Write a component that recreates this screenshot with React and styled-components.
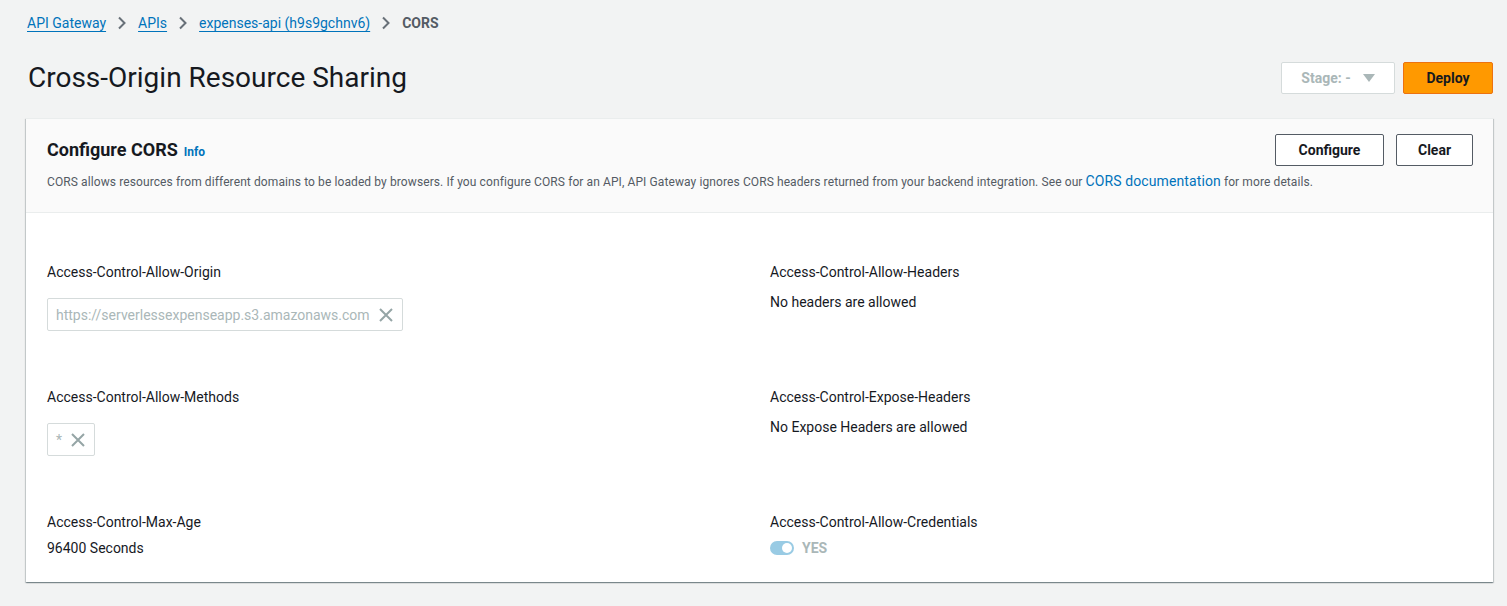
import React from 'react';
import styled, { createGlobalStyle } from 'styled-components';

const GlobalStyle = createGlobalStyle`
  body {
    margin: 0;
    background: #f2f3f3;
    font-family: Roboto, "Liberation Sans", sans-serif;
    color: #16191f;
  }
`

const Page = styled.div`
  padding: 12px 14px 24px 26px;
`

const Crumbs = styled.nav`
  display: flex;
  align-items: center;
  gap: 11px;
  font-size: 14px;
  height: 22px;
  padding-left: 1px;
`

const Crumb = styled.a`
  color: #0073bb;
  text-decoration: underline;
  text-underline-offset: 3px;
`

const Current = styled.span`
  color: #545b64;
  font-weight: 700;
`

const Chevron = () => (
  <svg width="10" height="14" viewBox="0 0 10 14">
    <path d="M2 1.5l5.5 5.5L2 12.5" fill="none" stroke="#687078" strokeWidth="2" />
  </svg>
)

const TitleRow = styled.div`
  display: flex;
  align-items: center;
  justify-content: space-between;
  margin-top: 27px;
  margin-bottom: 24px;
`

const Title = styled.h1`
  margin: 0;
  font-size: 28px;
  font-weight: 400;
  padding-left: 2px;
`

const Actions = styled.div`
  display: flex;
  gap: 8px;
`

const Button = styled.button`
  height: 32px;
  padding: 0 16px;
  font-family: inherit;
  font-size: 14px;
  font-weight: 700;
  white-space: nowrap;
  border-radius: 2px;
  cursor: pointer;
  border: 1px solid ${p => p.$primary ? '#ec7211' : p.$disabled ? '#d5dbdb' : '#545b64'};
  background: ${p => p.$primary ? '#ff9900' : '#fff'};
  color: ${p => p.$disabled ? '#aab7b8' : '#16191f'};
  width: ${p => p.$w || 'auto'};
  display: flex;
  align-items: center;
  justify-content: center;
  gap: 12px;
`

const Panel = styled.section`
  background: #fff;
  box-shadow: 0 1px 1px 0 rgba(0,28,36,0.3), 1px 1px 1px 0 rgba(0,28,36,0.15), -1px 1px 1px 0 rgba(0,28,36,0.15);
  border-top: 1px solid #eaeded;
`

const PanelHead = styled.header`
  background: #fafafa;
  border-bottom: 1px solid #eaeded;
  padding: 15px 20px 23px 21px;
`

const HeadTop = styled.div`
  display: flex;
  justify-content: space-between;
  align-items: flex-start;
`

const PanelTitle = styled.h2`
  margin: 5px 0 0;
  font-size: 18px;
  font-weight: 700;
  display: flex;
  align-items: baseline;
  gap: 6px;
`

const Info = styled.a`
  font-size: 12px;
  color: #0073bb;
  font-weight: 700;
`

const Desc = styled.p`
  margin: 7px 0 0;
  font-size: 12px;
  color: #545b64;
  letter-spacing: 0.1px;
`

const Link = styled.a`
  color: #0073bb;
  font-size: 14px;
`

const HeadButtons = styled.div`
  display: flex;
  gap: 12px;
`

const Body = styled.div`
  display: grid;
  grid-template-columns: 1fr 1fr;
  column-gap: 20px;
  padding: 51px 20px 20px 21px;
`

const Field = styled.div`
  height: 125px;
  &:last-child, &:nth-last-child(2) { height: 48px; }
`

const Label = styled.div`
  font-size: 14px;
  margin-bottom: ${p => p.$gap || '14px'};
`

const Value = styled.div`
  font-size: 14px;
`

const InputBox = styled.div`
  display: inline-flex;
  align-items: center;
  gap: 8px;
  height: 31px;
  padding: 0 8px;
  border: 1px solid #d5dbdb;
  border-radius: 2px;
  font-size: 14px;
  color: #aab7b8;
  background: #fff;
`

const Close = () => (
  <svg width="16" height="16" viewBox="0 0 16 16">
    <path d="M2 2l12 12M14 2L2 14" stroke="#95a5a6" strokeWidth="2" />
  </svg>
)

const Toggle = styled.div`
  display: flex;
  align-items: center;
  gap: 8px;
  font-size: 14px;
  font-weight: 700;
  color: #aab7b8;
`

const Track = styled.span`
  width: 24px;
  height: 14px;
  border-radius: 7px;
  background: #99cbe4;
  position: relative;
  &::after {
    content: '';
    position: absolute;
    right: 2px;
    top: 2px;
    width: 10px;
    height: 10px;
    border-radius: 50%;
    background: #fff;
  }
`

const Caret = () => (
  <svg width="12" height="10" viewBox="0 0 12 10">
    <path d="M0 1h12L6 9z" fill="#aab7b8" />
  </svg>
)

export default function App() {
  return (
    <Page>
      <GlobalStyle />
      <Crumbs>
        <Crumb>API Gateway</Crumb>
        <Chevron />
        <Crumb>APIs</Crumb>
        <Chevron />
        <Crumb>expenses-api (h9s9gchnv6)</Crumb>
        <Chevron />
        <Current>CORS</Current>
      </Crumbs>
      <TitleRow>
        <Title>Cross-Origin Resource Sharing</Title>
        <Actions>
          <Button $disabled $w="114px">Stage: - <Caret /></Button>
          <Button $primary $w="90px">Deploy</Button>
        </Actions>
      </TitleRow>
      <Panel>
        <PanelHead>
          <HeadTop>
            <PanelTitle>Configure CORS <Info>Info</Info></PanelTitle>
            <HeadButtons>
              <Button $w="109px">Configure</Button>
              <Button $w="77px">Clear</Button>
            </HeadButtons>
          </HeadTop>
          <Desc>
            CORS allows resources from different domains to be loaded by browsers. If you configure CORS for an API, API Gateway ignores CORS headers returned from your backend integration. See our <Link>CORS documentation</Link> for more details.
          </Desc>
        </PanelHead>
        <Body>
          <Field>
            <Label $gap="18px">Access-Control-Allow-Origin</Label>
            <InputBox>https://serverlessexpenseapp.s3.amazonaws.com <Close /></InputBox>
          </Field>
          <Field>
            <Label>Access-Control-Allow-Headers</Label>
            <Value>No headers are allowed</Value>
          </Field>
          <Field>
            <Label $gap="18px">Access-Control-Allow-Methods</Label>
            <InputBox>* <Close /></InputBox>
          </Field>
          <Field>
            <Label>Access-Control-Expose-Headers</Label>
            <Value>No Expose Headers are allowed</Value>
          </Field>
          <Field>
            <Label $gap="10px">Access-Control-Max-Age</Label>
            <Value>96400 Seconds</Value>
          </Field>
          <Field>
            <Label $gap="10px">Access-Control-Allow-Credentials</Label>
            <Toggle><Track />YES</Toggle>
          </Field>
        </Body>
      </Panel>
    </Page>
  )
}
